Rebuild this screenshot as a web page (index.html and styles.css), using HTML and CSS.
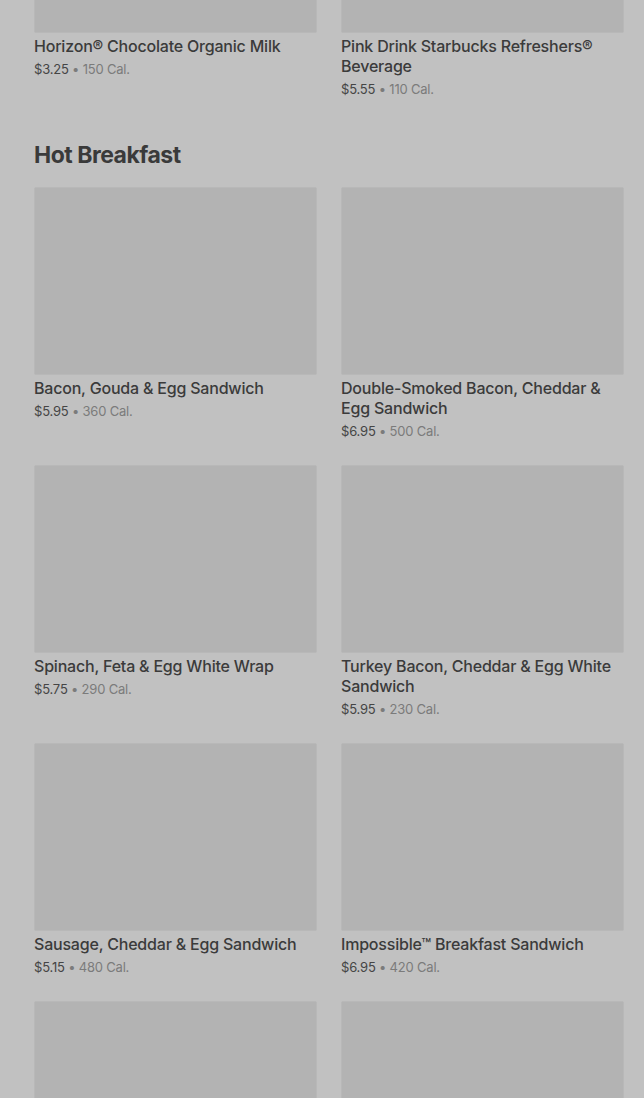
FILE: index.html
```html
<!DOCTYPE html>
<html lang="en">
<head>
  <meta charset="UTF-8" />
  <title>Menu</title>
  <link rel="stylesheet" href="styles.css">
</head>
<body>
  <main class="menu">
    <section class="section">
      <div class="grid">
        <div class="card">
          <div class="thumb"></div>
          <h3 class="name">Horizon® Chocolate Organic Milk</h3>
          <p class="meta"><span class="price">$3.25</span> • 150 Cal.</p>
        </div>
        <div class="card">
          <div class="thumb"></div>
          <h3 class="name">Pink Drink Starbucks Refreshers® Beverage</h3>
          <p class="meta"><span class="price">$5.55</span> • 110 Cal.</p>
        </div>
      </div>
    </section>

    <section class="section">
      <h2 class="section-title">Hot Breakfast</h2>
      <div class="grid">
        <div class="card">
          <div class="thumb"></div>
          <h3 class="name">Bacon, Gouda &amp; Egg Sandwich</h3>
          <p class="meta"><span class="price">$5.95</span> • 360 Cal.</p>
        </div>
        <div class="card">
          <div class="thumb"></div>
          <h3 class="name">Double-Smoked Bacon, Cheddar &amp; Egg Sandwich</h3>
          <p class="meta"><span class="price">$6.95</span> • 500 Cal.</p>
        </div>
        <div class="card">
          <div class="thumb"></div>
          <h3 class="name">Spinach, Feta &amp; Egg White Wrap</h3>
          <p class="meta"><span class="price">$5.75</span> • 290 Cal.</p>
        </div>
        <div class="card">
          <div class="thumb"></div>
          <h3 class="name">Turkey Bacon, Cheddar &amp; Egg White Sandwich</h3>
          <p class="meta"><span class="price">$5.95</span> • 230 Cal.</p>
        </div>
        <div class="card">
          <div class="thumb"></div>
          <h3 class="name">Sausage, Cheddar &amp; Egg Sandwich</h3>
          <p class="meta"><span class="price">$5.15</span> • 480 Cal.</p>
        </div>
        <div class="card">
          <div class="thumb"></div>
          <h3 class="name">Impossible™ Breakfast Sandwich</h3>
          <p class="meta"><span class="price">$6.95</span> • 420 Cal.</p>
        </div>
        <div class="card">
          <div class="thumb"></div>
        </div>
        <div class="card">
          <div class="thumb"></div>
        </div>
      </div>
    </section>
  </main>
</body>
</html>
```

FILE: styles.css
```css
* {
  box-sizing: border-box;
}
html, body {
  height: 100%;
  overflow: hidden;
}
body {
  margin: 0;
  background: #c1c1c1;
  color: #3b3b3b;
  font-family: Inter, "Liberation Sans", sans-serif;
}
.menu {
  margin-top: -155px;
  padding: 0 20px 0 34px;
}
.section {
  padding-bottom: 40px;
}
.section-title {
  margin: 0 0 16px 0;
  font-size: 23px;
  line-height: 32px;
  font-weight: 700;
  color: #3a3a3a;
  letter-spacing: -0.5px;
}
.grid {
  display: grid;
  grid-template-columns: 1fr 1fr;
  column-gap: 24px;
  row-gap: 24px;
}
.card {
  display: flex;
  flex-direction: column;
}
.thumb {
  height: 188px;
  background: #b3b3b3;
  border: 1px solid #b8b8b8;
  border-radius: 2px;
}
.name {
  margin: 3px 0 0 0;
  font-size: 16px;
  line-height: 20px;
  font-weight: 500;
  color: #3b3b3b;
  letter-spacing: -0.2px;
}
.meta {
  margin: 3px 0 0 0;
  font-size: 13px;
  line-height: 20px;
  color: #7b7b7b;
  letter-spacing: -0.2px;
}
.price {
  color: #454545;
}
```
